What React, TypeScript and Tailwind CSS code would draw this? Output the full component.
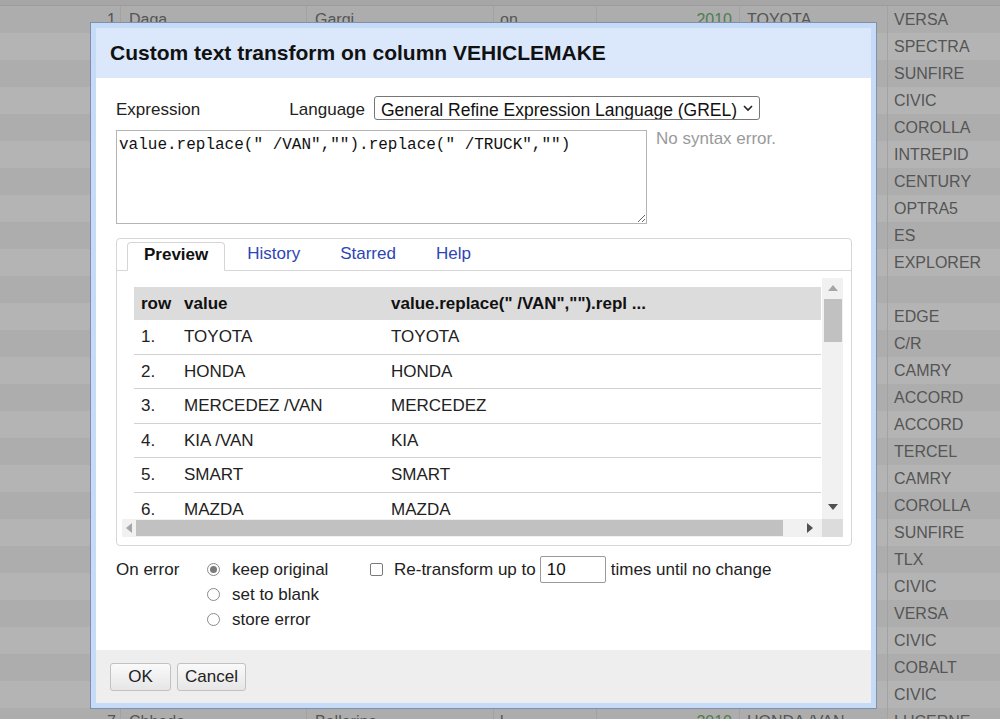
import React from 'react';

const makes = [
  'VERSA', 'SPECTRA', 'SUNFIRE', 'CIVIC', 'COROLLA', 'INTREPID', 'CENTURY', 'OPTRA5', 'ES',
  'EXPLORER', '', 'EDGE', 'C/R', 'CAMRY', 'ACCORD', 'ACCORD', 'TERCEL', 'CAMRY', 'COROLLA',
  'SUNFIRE', 'TLX', 'CIVIC', 'VERSA', 'CIVIC', 'COBALT', 'CIVIC', 'LUCERNE',
];

const bgRows = makes.map((make, i) => {
  if (i === 0) return { num: '1', first: 'Daga', last: 'Gargi', g: 'on', year: '2010', veh: 'TOYOTA', make };
  if (i === 26) return { num: '7', first: 'Chheda', last: 'Ballerina', g: 'l', year: '2010', veh: 'HONDA /VAN', make };
  return { num: '', first: '', last: '', g: '', year: '', veh: '', make };
});

const preview = [
  ['1.', 'TOYOTA', 'TOYOTA'],
  ['2.', 'HONDA', 'HONDA'],
  ['3.', 'MERCEDEZ /VAN', 'MERCEDEZ'],
  ['4.', 'KIA /VAN', 'KIA'],
  ['5.', 'SMART', 'SMART'],
  ['6.', 'MAZDA', 'MAZDA'],
];

const Arrow = ({ dir, color }: { dir: 'up' | 'down' | 'left' | 'right'; color: string }) => {
  const pts = {
    up: '0,6 5,0 10,6',
    down: '0,0 10,0 5,6',
    left: '6,0 6,10 0,5',
    right: '0,0 6,5 0,10',
  }[dir];
  const vert = dir === 'up' || dir === 'down';
  return (
    <svg width={vert ? 10 : 6} height={vert ? 6 : 10} viewBox={vert ? '0 0 10 6' : '0 0 6 10'}>
      <polygon points={pts} fill={color} />
    </svg>
  );
};

const Radio = ({ checked }: { checked?: boolean }) => (
  <span className="flex h-[13px] w-[13px] items-center justify-center rounded-full border border-[#8a8a8a] bg-white">
    {checked && <span className="h-[7px] w-[7px] rounded-full bg-[#7a7a7a]" />}
  </span>
);

export default function App() {
  return (
    <div className="relative h-[719px] w-[1000px] overflow-hidden bg-[#b0b0b0] font-['Liberation_Sans',Arial,sans-serif]">
      {/* dimmed data grid behind the dialog */}
      <div className="flex flex-col">
        <div className="h-[6px] border-b border-[#9c9c9c] bg-[#a6a6a6]" />
        {bgRows.map((r, i) => (
          <div
            key={i}
            className={`flex h-[27px] items-center text-[16px] text-[#555] ${i % 2 === 0 ? 'bg-[#adadad]' : 'bg-[#b4b4b4]'}`}
          >
            <div className="h-full w-[121px] border-r border-[#a2a2a2] pr-[4px] text-right leading-[27px]">{r.num}</div>
            <div className="h-full w-[186px] border-r border-[#a2a2a2] pl-[8px] leading-[27px]">{r.first}</div>
            <div className="h-full w-[187px] border-r border-[#a2a2a2] pl-[8px] leading-[27px]">{r.last}</div>
            <div className="h-full w-[103px] border-r border-[#a2a2a2] pl-[6px] leading-[27px]">{r.g}</div>
            <div className="h-full w-[143px] border-r border-[#a2a2a2] pr-[7px] text-right leading-[27px] text-[#4f7d4f]">{r.year}</div>
            <div className="h-full w-[148px] border-r border-[#a2a2a2] pl-[7px] leading-[27px]">{r.veh}</div>
            <div className="h-full flex-1 pl-[6px] leading-[27px]">{r.make}</div>
          </div>
        ))}
      </div>

      {/* dialog */}
      <div className="absolute left-[90px] top-[22px] h-[687px] w-[787px] border border-[#8090a8]">
        <div className="flex h-full flex-col border-[5px] border-[#c6dbf8] bg-white">
          <div className="flex h-[50px] items-center bg-[#dbe8fb] pl-[14px] text-[21px] font-bold text-[#111]">
            Custom text transform on column VEHICLEMAKE
          </div>

          <div className="flex flex-1 flex-col px-[20px] pt-[20px] text-[17px] text-[#222]">
            <div className="flex h-[24px] items-center">
              <div className="flex w-[258px] justify-between pr-[9px]">
                <span>Expression</span>
                <span>Language</span>
              </div>
              <div className="relative">
                <select className="h-[24px] w-[386px] appearance-none rounded-[3px] border border-[#767676] bg-white pl-[6px] text-[17.5px] text-[#111] outline-none">
                  <option>General Refine Expression Language (GREL)</option>
                </select>
                <svg className="pointer-events-none absolute right-[7px] top-[9px]" width="10" height="7" viewBox="0 0 10 7">
                  <path d="M1 1 L5 5 L9 1" fill="none" stroke="#222" strokeWidth="1.6" />
                </svg>
              </div>
            </div>

            <div className="mt-[8px] flex items-start">
              <textarea
                className="h-[94px] w-[531px] resize border border-[#b4b4b4] px-[2px] pt-[4px] font-['Liberation_Mono',monospace] text-[16px] leading-[20px] text-[#111] outline-none"
                defaultValue={'value.replace(" /VAN","").replace(" /TRUCK","")'}
                spellCheck={false}
              />
              <span className="ml-[9px] leading-[18px] text-[#9a9a9a]">No syntax error.</span>
            </div>

            <div className="mt-[14px] flex h-[308px] w-[736px] flex-col rounded-[4px] border border-[#d6d6d6]">
              <div className="flex h-[32px] items-end border-b border-[#d6d6d6] pl-[10px]">
                <div className="-mb-px flex h-[29px] items-center rounded-t-[4px] border border-b-white border-[#d6d6d6] bg-white px-[16px] pb-[3px] font-bold text-[#111]">
                  Preview
                </div>
                <div className="ml-[5px] flex h-[29px] items-center px-[17px] pb-[3px] text-[#2d45b6]">History</div>
                <div className="ml-[6px] flex h-[29px] items-center px-[17px] pb-[3px] text-[#2d45b6]">Starred</div>
                <div className="ml-[6px] flex h-[29px] items-center px-[17px] pb-[3px] text-[#2d45b6]">Help</div>
              </div>

              <div className="ml-[5px] mt-[7px] grid h-[259px] w-[721px] grid-cols-[700px_21px] grid-rows-[241px_18px]">
                <div className="overflow-hidden pl-[12px] pt-[9px]">
                  <div className="w-[687px]">
                    <div className="flex h-[33px] items-center bg-[#dcdcdc] font-bold text-[#111]">
                      <div className="w-[50px] pl-[7px]">row</div>
                      <div className="w-[207px]">value</div>
                      <div>value.replace(" /VAN","").repl ...</div>
                    </div>
                    {preview.map((p) => (
                      <div key={p[0]} className="flex h-[34.5px] items-center border-b border-[#d2d2d2]">
                        <div className="w-[50px] pl-[7px]">{p[0]}</div>
                        <div className="w-[207px]">{p[1]}</div>
                        <div>{p[2]}</div>
                      </div>
                    ))}
                  </div>
                </div>

                <div className="flex flex-col items-center bg-[#f1f1f1]">
                  <div className="flex h-[20px] items-center">
                    <Arrow dir="up" color="#a6a6a6" />
                  </div>
                  <div className="mt-[1px] h-[43px] w-[18px] bg-[#c1c1c1]" />
                  <div className="flex-1" />
                  <div className="flex h-[20px] items-center pb-[4px]">
                    <Arrow dir="down" color="#505050" />
                  </div>
                </div>

                <div className="flex items-center bg-[#f1f1f1]">
                  <div className="flex w-[14px] justify-center">
                    <Arrow dir="left" color="#a6a6a6" />
                  </div>
                  <div className="h-[16px] w-[647px] bg-[#c1c1c1]" />
                  <div className="flex flex-1 justify-end pr-[9px]">
                    <Arrow dir="right" color="#505050" />
                  </div>
                </div>
                <div className="bg-[#dcdcdc]" />
              </div>
            </div>

            <div className="mt-[11px] flex items-start">
              <div className="w-[91px] leading-[25px]">On error</div>
              <div className="flex w-[163px] flex-col">
                <div className="flex h-[25px] items-center gap-[12px]">
                  <Radio checked />
                  <span>keep original</span>
                </div>
                <div className="flex h-[25px] items-center gap-[12px]">
                  <Radio />
                  <span>set to blank</span>
                </div>
                <div className="flex h-[25px] items-center gap-[12px]">
                  <Radio />
                  <span>store error</span>
                </div>
              </div>
              <div className="-mt-px flex h-[27px] items-center">
                <span className="h-[13px] w-[13px] rounded-[2px] border border-[#7a7a7a] bg-white" />
                <span className="ml-[11px]">Re-transform up to</span>
                <div className="ml-[4px] flex h-[27px] w-[66px] items-center rounded-[2px] border border-[#9a9a9a] pl-[6px] text-[#111]">
                  10
                </div>
                <span className="ml-[5px]">times until no change</span>
              </div>
            </div>
          </div>

          <div className="flex h-[53px] items-start gap-[6px] bg-[#eeeeee] pl-[14px] pt-[13px]">
            <button className="h-[28px] w-[61px] rounded-[3px] border border-[#c2c2c2] bg-gradient-to-b from-[#fafafa] to-[#e6e6e6] text-[17px] text-[#222]">
              OK
            </button>
            <button className="h-[28px] w-[69px] rounded-[3px] border border-[#c2c2c2] bg-gradient-to-b from-[#fafafa] to-[#e6e6e6] text-[17px] text-[#222]">
              Cancel
            </button>
          </div>
        </div>
      </div>
    </div>
  );
}
